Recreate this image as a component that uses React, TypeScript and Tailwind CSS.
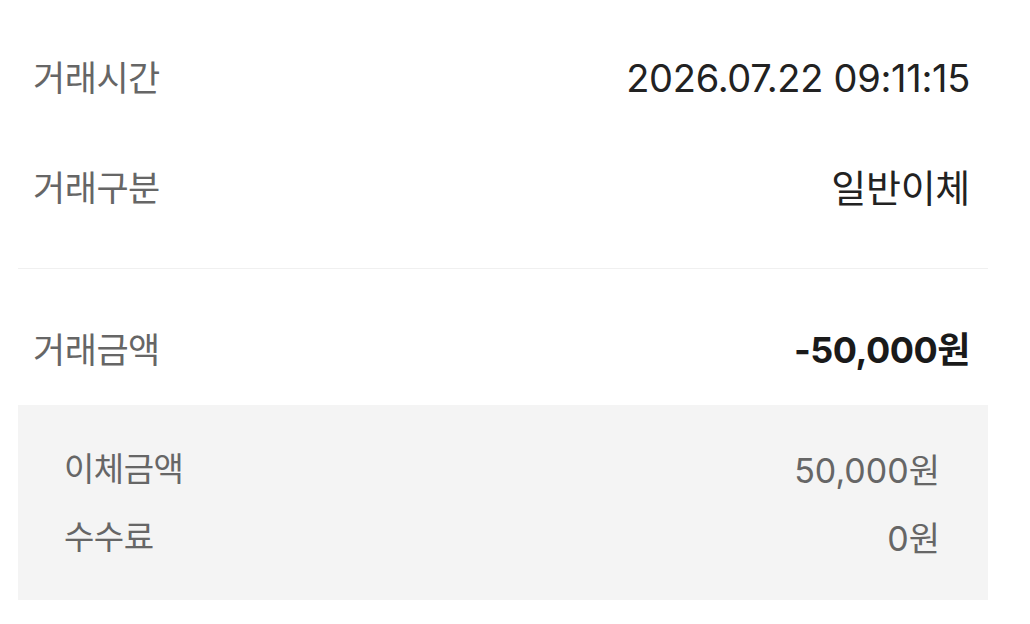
const font = { fontFamily: 'Inter, "Noto Sans CJK KR", sans-serif' }

const rows = [
  { label: '거래시간', value: '2026.07.22 09:11:15' },
  { label: '거래구분', value: '일반이체' },
]

const details = [
  { label: '이체금액', value: '50,000원' },
  { label: '수수료', value: '0원' },
]

export default function App() {
  return (
    <div className="w-[1030px] h-[624px] bg-white overflow-hidden" style={font}>
      <div className="ml-[18px] w-[970px] pt-[23px]">
        {rows.map((row) => (
          <div key={row.label} className="h-[110px] flex items-center justify-between pl-[15px] pr-[18px]">
            <span className="text-[35px] text-[#666666] tracking-[-0.5px]">{row.label}</span>
            <span className="text-[38px] text-[#222222] tracking-[-0.3px]">{row.value}</span>
          </div>
        ))}

        <div className="mt-[25px] border-t border-[#f0f0f0]" />

        <div className="mt-[26px] h-[110px] flex items-center justify-between pl-[15px] pr-[18px]">
          <span className="text-[35px] text-[#666666] tracking-[-0.5px]">거래금액</span>
          <span className="text-[36px] font-bold text-[#1a1a1a] tracking-[-0.5px]">-50,000원</span>
        </div>

        <div className="bg-[#f4f4f4] h-[195px] pt-[31px] pl-[46px] pr-[48px]">
          {details.map((d) => (
            <div key={d.label} className="h-[68px] flex items-center justify-between">
              <span className="text-[33px] text-[#666666] tracking-[-0.5px]">{d.label}</span>
              <span className="text-[34px] text-[#666666]">{d.value}</span>
            </div>
          ))}
        </div>
      </div>
    </div>
  )
}
